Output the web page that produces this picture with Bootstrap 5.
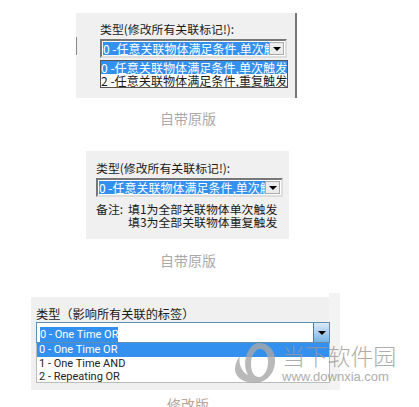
<!DOCTYPE html>
<html lang="zh"><head><meta charset="utf-8">
<link href="https://cdn.jsdelivr.net/npm/bootstrap@5.3.0/dist/css/bootstrap.min.css" rel="stylesheet">
<style>
html,body{margin:0;height:407px;overflow:hidden;background:#fff}
body{font-family:"Noto Sans CJK SC","Liberation Sans",sans-serif;color:#1a1a1a;font-size:12px;line-height:14px;position:relative}
.shot{background:#f0f0f0;box-sizing:border-box}
.s1{width:221px;height:85px;margin:13px 0 0 76px;padding:9px 0 0 24px;border-right:2px solid #777;position:relative}
.tick{position:absolute;left:0;top:24px;width:1px;height:18px;background:#888}
.s2{width:203px;height:88px;margin:0 0 0 86px;padding:10px 0 0 10px}
.lbl{height:14px;font-size:11.9px;line-height:13px;white-space:nowrap}
.cb{display:flex;width:187px;height:19px;margin-top:3px;background:#fff;border:2px solid;border-color:#777 #ddd #ddd #777;padding:1px}
.cbt{flex:1;min-width:0;background:#3490ef;color:#fff;overflow:hidden;white-space:nowrap;font-size:12px;line-height:14px}
.cbb{width:15px;background:#ececec;border:1px solid #aaa;display:flex;align-items:center;justify-content:center}
.tri{width:0;height:0;border:4px solid transparent;border-top:4px solid #000;border-bottom:0}
.drop{width:188px;height:28px;margin-top:2px;background:#fff;border:1px solid #555;font-size:12.1px;line-height:13px;white-space:nowrap;overflow:hidden}
.on{background:#3490ef;color:#fff}
.cap{color:#aaa;font-size:14px;line-height:16px;text-align:center;white-space:nowrap}
.c1{width:60px;margin:12px 0 25px 158px}
.c2{width:60px;margin:13px 0 29px 158px}
.note{display:grid;grid-template-columns:32px auto;margin-top:5px;font-size:11.9px;line-height:13px;white-space:nowrap}
.s3{width:309px;height:93px;margin:0 0 0 31px;padding:10px 0 0 5px;background:#f0f0f0;position:relative}
.ear{position:absolute;right:0;top:-4px;width:11px;height:97px;background:#f3f3f3}
.lbl3{font-size:12.2px;line-height:14px;white-space:nowrap}
.cb3{display:flex;width:294px;height:21px;background:#fff;border:1px solid #5f8fae;margin-top:1px;position:relative}
.cb3t{flex:1;padding:2px 0 0 3px;line-height:16px}
.cb3t span{background:#3490ef;color:#fff;font-family:Roboto,sans-serif;font-size:11px;line-height:15px;display:inline-block}
.cb3b{width:16px;background:linear-gradient(#dbeaf6,#76b3e4);border-left:1px solid #4d7d9c;display:flex;align-items:center;justify-content:center}
.drop3{width:294px;height:40px;background:#fff;border:1px solid #bbb;border-top:0;font-family:Roboto,sans-serif;font-size:11px;line-height:13px;white-space:nowrap;color:#222;position:relative}
.drop3 div{padding-left:2px}
.drop3 .on{height:14px;line-height:14px}
.c3{color:#b9a594;width:60px;margin:6px 0 0 158px}
.wm{position:absolute;left:234px;top:342px;display:flex;gap:6px;color:#999;opacity:.8}
.wm1{font-size:23px;line-height:26px;letter-spacing:-.2px;white-space:nowrap;font-weight:300}
.wm2{font-family:"Liberation Sans",sans-serif;font-size:13px;line-height:14px;margin-top:2px;white-space:nowrap}
</style></head><body>
<div class="shot s1"><div class="tick"></div>
 <div class="lbl">类型(修改所有关联标记!):</div>
 <div class="cb"><div class="cbt">0 -任意关联物体满足条件,单次触发</div><div class="cbb"><div class="tri"></div></div></div>
 <div class="drop"><div class="on">0 -任意关联物体满足条件,单次触发</div><div>2 -任意关联物体满足条件,重复触发</div></div>
</div>
<div class="cap c1">自带原版</div>
<div class="shot s2">
 <div class="lbl">类型(修改所有关联标记!):</div>
 <div class="cb"><div class="cbt">0 -任意关联物体满足条件,单次触发</div><div class="cbb"><div class="tri"></div></div></div>
 <div class="note"><div>备注:</div><div>填1为全部关联物体单次触发<br>填3为全部关联物体重复触发</div></div>
</div>
<div class="cap c2">自带原版</div>
<div class="s3"><div class="ear"></div>
 <div class="lbl3">类型（影响所有关联的标签）</div>
 <div class="cb3"><div class="cb3t"><span>0 - One Time OR</span></div><div class="cb3b"><div class="tri"></div></div></div>
 <div class="drop3"><div class="on">0 - One Time OR</div><div>1 - One Time AND</div><div>2 - Repeating OR</div></div>
</div>
<div class="cap c3">修改版</div>
<div class="wm">
 <svg width="42" height="42" viewBox="0 0 42 42"><path fill="#a8a8a8" fill-rule="evenodd" d="M25 1C36 1 42 10 41 21 40 33 31 41 21 41 11 41 1 36 1 27 1 22 3 18 6 14 4 22 8 30 14 33 10 26 10 16 15 8 18 3 21 1 25 1ZM26 7C21 7 17 14 17 22 17 30 20 35 25 35 30 35 34 28 34 20 34 12 31 7 26 7Z"/></svg>
 <div><div class="wm1">当下软件园</div><div class="wm2">www.downxia.com</div></div>
</div>
<script src="https://cdn.jsdelivr.net/npm/bootstrap@5.3.0/dist/js/bootstrap.bundle.min.js"></script>
</body></html>
